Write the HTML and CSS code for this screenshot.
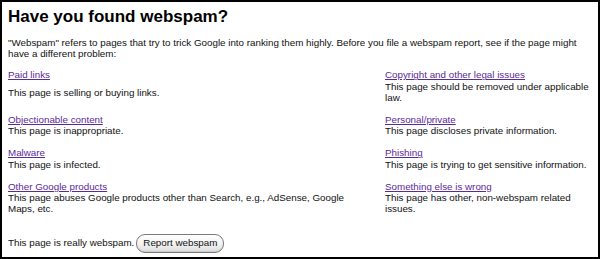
FILE: index.html
```html
<!DOCTYPE html>
<html lang="en">
<head>
<meta charset="utf-8">
<title>Have you found webspam?</title>
<link rel="stylesheet" href="styles.css">
</head>
<body>
<div class="frame">
  <h1 class="title">Have you found webspam?</h1>
  <p class="intro">"Webspam" refers to pages that try to trick Google into ranking them highly. Before you file a webspam report, see if the page might have a different problem:</p>
  <div class="options">
    <div class="item">
      <a class="link" href="#">Paid links</a>
      <div class="desc desc-spaced">This page is selling or buying links.</div>
    </div>
    <div class="item">
      <a class="link" href="#">Copyright and other legal issues</a>
      <div class="desc">This page should be removed under applicable law.</div>
    </div>
    <div class="item">
      <a class="link" href="#">Objectionable content</a>
      <div class="desc">This page is inappropriate.</div>
    </div>
    <div class="item">
      <a class="link" href="#">Personal/private</a>
      <div class="desc">This page discloses private information.</div>
    </div>
    <div class="item">
      <a class="link" href="#">Malware</a>
      <div class="desc">This page is infected.</div>
    </div>
    <div class="item">
      <a class="link" href="#">Phishing</a>
      <div class="desc">This page is trying to get sensitive information.</div>
    </div>
    <div class="item">
      <a class="link" href="#">Other Google products</a>
      <div class="desc">This page abuses Google products other than Search, e.g., AdSense, Google Maps, etc.</div>
    </div>
    <div class="item">
      <a class="link" href="#">Something else is wrong</a>
      <div class="desc">This page has other, non-webspam related issues.</div>
    </div>
  </div>
  <div class="final">
    <span class="final-text">This page is really webspam.</span>
    <button class="report" type="button">Report webspam</button>
  </div>
</div>
</body>
</html>
```
FILE: styles.css
```css
html, body {
  margin: 0;
  padding: 0;
  background: #fff;
}

.frame {
  box-sizing: border-box;
  width: 600px;
  height: 259px;
  border: 2px solid #000;
  padding: 5px 2px 0 6px;
  font-family: "Liberation Sans", Arial, sans-serif;
  font-size: 9.8px;
  line-height: 11.4px;
  color: #111;
}

.title {
  margin: 0;
  font-size: 17px;
  font-weight: 700;
  line-height: 19.5px;
  color: #000;
}

.intro {
  margin: 10px 0 0;
}

.options {
  margin-top: 10px;
  display: grid;
  grid-template-columns: 360px 1fr;
  column-gap: 17px;
  row-gap: 10.5px;
}

.item {
  display: flex;
  flex-direction: column;
  align-items: flex-start;
}

.link {
  color: #5a2a96;
  text-decoration: underline;
}

.desc-spaced {
  margin-top: 6px;
}

.final {
  margin-top: 19px;
  display: flex;
  align-items: baseline;
  gap: 2px;
}

.report {
  font-family: "Liberation Sans", Arial, sans-serif;
  font-size: 9.8px;
  line-height: 11.4px;
  color: #111;
  padding: 2px 6px 3.6px;
  border: 1px solid #7a7a7a;
  border-radius: 9px;
  background: linear-gradient(#ffffff, #f2f2f2 55%, #dcdcdc);
  box-shadow: inset 0 -1px 1px rgba(0, 0, 0, 0.08);
}
```
